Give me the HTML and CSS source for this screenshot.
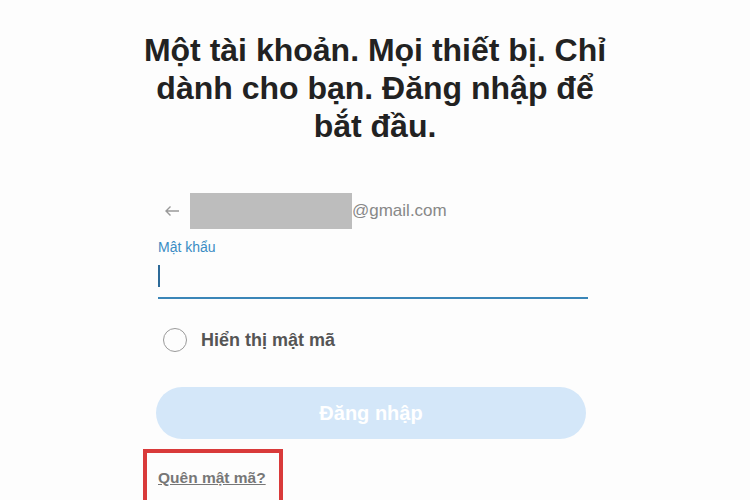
FILE: index.html
```html
<!DOCTYPE html>
<html>

<link rel="stylesheet" href="styles.css">

<head>
    <meta charset="utf-8">
    <title>Đăng nhập</title>
    <meta name="viewport" content="width=device-width, initial-scale=1">
</head>

<body>
    <main>
        <h1>Một tài khoản. Mọi thiết bị. Chỉ dành cho bạn. Đăng nhập để bắt đầu.</h1>
        <form class="LoginForm">
            <div class="Account">
                <svg class="Back" width="16" height="12" viewBox="0 0 16 12">
                    <path d="M15 6H2M6.5 1.5L2 6l4.5 4.5" fill="none" stroke="#999" stroke-width="1.4" />
                </svg>
                <span class="Hidden"></span>
                <span class="Mail">@gmail.com</span>
            </div>
            <div class="Field">
                <label for="password">Mật khẩu</label>
                <div class="Input">
                    <span class="Caret"></span>
                </div>
            </div>
            <div class="Show">
                <span class="Radio"></span>
                <span>Hiển thị mật mã</span>
            </div>
            <button type="submit" disabled>Đăng nhập</button>
            <div class="Forgot">
                <a href="#">Quên mật mã?</a>
            </div>
        </form>
    </main>
</body>

</html>
```

FILE: styles.css
```css
* {
    box-sizing: border-box;
    padding: 0;
    margin: 0;
}

body {
    background-color: #fdfdfd;
    font-family: "Liberation Sans", Arial, sans-serif;
    overflow: hidden;

    & main {
        display: flex;
        flex-direction: column;
        align-items: center;
        padding-top: 31px;

        & h1 {
            width: 474px;
            font-size: 32px;
            line-height: 38px;
            font-weight: 700;
            color: #222;
            text-align: center;
        }
    }
}

.LoginForm {
    width: 432px;
    margin-top: 48px;
    margin-left: -6px;
    display: flex;
    flex-direction: column;

    & .Account {
        display: flex;
        align-items: center;
        height: 36px;
        padding-left: 8px;

        & .Back {
            margin-right: 10px;
        }

        & .Hidden {
            width: 162px;
            height: 36px;
            background-color: #bdbdbd;
        }

        & .Mail {
            font-size: 17px;
            color: #888;
        }
    }

    & .Field {
        padding-left: 2px;
        margin-top: 10px;

        & label {
            display: block;
            font-size: 14px;
            color: #3a8cc4;
        }

        & .Input {
            height: 44px;
            padding-top: 10px;
            border-bottom: 2px solid #3a86b8;

            & .Caret {
                display: block;
                width: 2px;
                height: 22px;
                background-color: #2d6a98;
            }
        }
    }

    & .Show {
        display: flex;
        align-items: center;
        gap: 14px;
        margin-top: 29px;
        padding-left: 7px;
        font-size: 18px;
        font-weight: 700;
        color: #555;

        & .Radio {
            width: 24px;
            height: 24px;
            border: 1.5px solid #9a9a9a;
            border-radius: 50%;
        }
    }

    & button {
        height: 52px;
        width: 430px;
        margin-top: 35px;
        border: none;
        border-radius: 26px;
        background-color: #d4e7f9;
        color: #fff;
        font-family: inherit;
        font-size: 20px;
        font-weight: 700;
    }

    & .Forgot {
        width: 140px;
        height: 60px;
        margin-top: 10px;
        margin-left: -13px;
        border: 4px solid #d93a3a;
        padding: 16px 0 0 11px;

        & a {
            font-size: 15.5px;
            font-weight: 700;
            color: #777;
        }
    }
}
```
